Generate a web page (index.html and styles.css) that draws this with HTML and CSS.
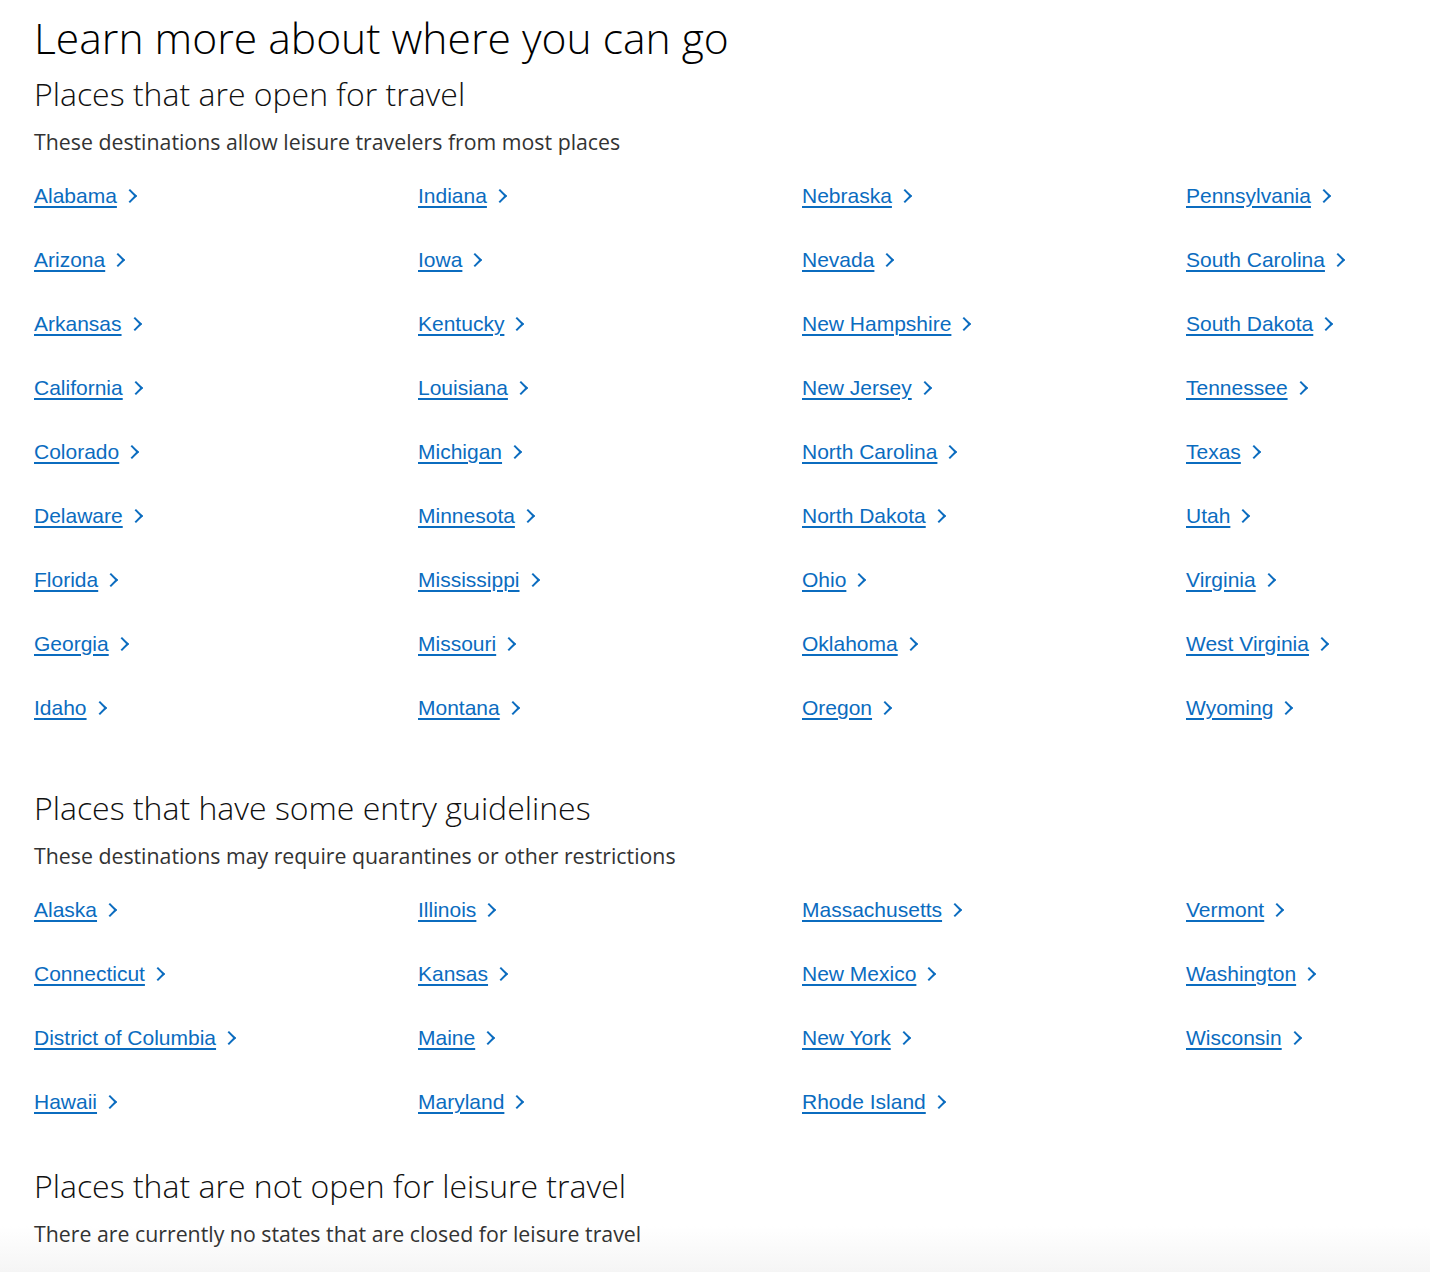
FILE: index.html
```html
<!DOCTYPE html>
<html lang="en">
<head>
<meta charset="utf-8">
<title>Learn more about where you can go</title>
<link rel="stylesheet" href="styles.css">
</head>
<body>
<main class="page">
  <h1 class="title">Learn more about where you can go</h1>

  <section class="group group-open">
    <h2 class="group-title">Places that are open for travel</h2>
    <p class="group-desc">These destinations allow leisure travelers from most places</p>
    <ul class="state-grid">
      <li><a href="#">Alabama</a></li>
      <li><a href="#">Indiana</a></li>
      <li><a href="#">Nebraska</a></li>
      <li><a href="#">Pennsylvania</a></li>
      <li><a href="#">Arizona</a></li>
      <li><a href="#">Iowa</a></li>
      <li><a href="#">Nevada</a></li>
      <li><a href="#">South Carolina</a></li>
      <li><a href="#">Arkansas</a></li>
      <li><a href="#">Kentucky</a></li>
      <li><a href="#">New Hampshire</a></li>
      <li><a href="#">South Dakota</a></li>
      <li><a href="#">California</a></li>
      <li><a href="#">Louisiana</a></li>
      <li><a href="#">New Jersey</a></li>
      <li><a href="#">Tennessee</a></li>
      <li><a href="#">Colorado</a></li>
      <li><a href="#">Michigan</a></li>
      <li><a href="#">North Carolina</a></li>
      <li><a href="#">Texas</a></li>
      <li><a href="#">Delaware</a></li>
      <li><a href="#">Minnesota</a></li>
      <li><a href="#">North Dakota</a></li>
      <li><a href="#">Utah</a></li>
      <li><a href="#">Florida</a></li>
      <li><a href="#">Mississippi</a></li>
      <li><a href="#">Ohio</a></li>
      <li><a href="#">Virginia</a></li>
      <li><a href="#">Georgia</a></li>
      <li><a href="#">Missouri</a></li>
      <li><a href="#">Oklahoma</a></li>
      <li><a href="#">West Virginia</a></li>
      <li><a href="#">Idaho</a></li>
      <li><a href="#">Montana</a></li>
      <li><a href="#">Oregon</a></li>
      <li><a href="#">Wyoming</a></li>
    </ul>
  </section>

  <section class="group group-some">
    <h2 class="group-title">Places that have some entry guidelines</h2>
    <p class="group-desc">These destinations may require quarantines or other restrictions</p>
    <ul class="state-grid">
      <li><a href="#">Alaska</a></li>
      <li><a href="#">Illinois</a></li>
      <li><a href="#">Massachusetts</a></li>
      <li><a href="#">Vermont</a></li>
      <li><a href="#">Connecticut</a></li>
      <li><a href="#">Kansas</a></li>
      <li><a href="#">New Mexico</a></li>
      <li><a href="#">Washington</a></li>
      <li><a href="#">District of Columbia</a></li>
      <li><a href="#">Maine</a></li>
      <li><a href="#">New York</a></li>
      <li><a href="#">Wisconsin</a></li>
      <li><a href="#">Hawaii</a></li>
      <li><a href="#">Maryland</a></li>
      <li><a href="#">Rhode Island</a></li>
    </ul>
  </section>

  <section class="group group-closed">
    <h2 class="group-title">Places that are not open for leisure travel</h2>
    <p class="group-desc">There are currently no states that are closed for leisure travel</p>
  </section>
</main>
</body>
</html>
```

FILE: styles.css
```css
html {
  background: linear-gradient(to bottom, #ffffff 0, #ffffff 1226px, #f5f5f5 1272px) no-repeat;
  background-size: 100% 1272px;
  background-color: #ffffff;
}

body {
  margin: 0;
  font-family: "Open Sans", "Liberation Sans", Arial, sans-serif;
  color: #222222;
}

.page {
  padding: 0 34px;
  min-height: 1272px;
  box-sizing: border-box;
}

.title {
  margin: 0;
  padding-top: 9px;
  font-size: 42.6px;
  line-height: 56px;
  font-weight: 300;
  color: #000000;
}

.group-title {
  margin: 0;
  font-size: 32px;
  line-height: 40px;
  font-weight: 300;
  color: #111111;
}

.group-desc {
  margin: 14px 0 0;
  font-size: 21.3px;
  line-height: 28px;
  font-weight: 400;
  color: #333333;
}

.group-open .group-title {
  margin-top: 9px;
}

.group-some {
  margin-top: 68px;
}

.group-closed {
  margin-top: 52px;
}

.state-grid {
  list-style: none;
  margin: 28px 0 0;
  padding: 0;
  display: grid;
  grid-template-columns: 384px 384px 384px 1fr;
  grid-auto-rows: 24px;
  row-gap: 40px;
}

.state-grid li {
  display: flex;
  align-items: center;
}

.state-grid a {
  font-family: "Liberation Sans", Arial, Helvetica, sans-serif;
  font-size: 21px;
  line-height: 24px;
  color: #0b6cbf;
  text-decoration: underline;
  text-decoration-thickness: 2px;
  text-underline-offset: 3px;
  display: inline-flex;
  align-items: center;
}

.state-grid a::after {
  content: "";
  display: inline-block;
  width: 8px;
  height: 8px;
  margin-left: 8px;
  border-right: 2px solid #0b6cbf;
  border-top: 2px solid #0b6cbf;
  transform: rotate(45deg);
}
```
